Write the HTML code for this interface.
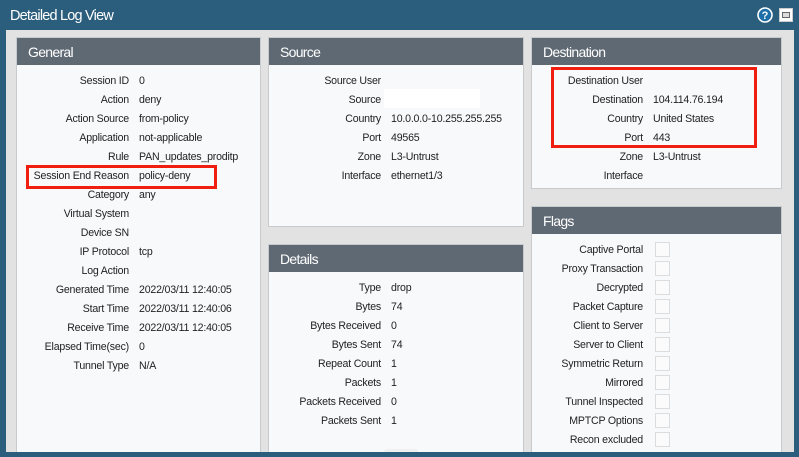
<!DOCTYPE html>
<html><head><style>
*{margin:0;padding:0;box-sizing:border-box}
body{width:799px;height:457px;overflow:hidden;background:#2b5d7c;font-family:"Liberation Sans",sans-serif;font-size:10.6px;color:#222;position:relative}
.title{position:absolute;left:10px;top:8px;color:#fff;font-size:14.5px;letter-spacing:-0.8px}
.area{position:absolute;left:6px;top:30px;width:788px;height:422px;background:#e2e2e2}
.p{position:absolute;background:#f8f9fa;border:1px solid #c8cbce}
.h{height:27px;background:#5f6973;color:#fff;font-size:14px;padding:6px 0 0 11px;letter-spacing:-0.7px}
.r{position:absolute;height:19px;line-height:19px;white-space:nowrap;letter-spacing:-0.2px}
.red{position:absolute;border:3px solid #f01e0e}
.cb{position:absolute;width:15px;height:15px;border:1px solid #dadcde;background:#fbfbfb}
</style></head><body>
<div class="title">Detailed Log View</div>
<svg style="position:absolute;left:757px;top:7px" width="16" height="16"><circle cx="8" cy="8" r="7" fill="#1e6ea8" stroke="#fff" stroke-width="1.6"/><text x="8" y="12" font-size="11" font-weight="bold" fill="#fff" text-anchor="middle" font-family="Liberation Sans">?</text></svg>
<div style="position:absolute;left:779px;top:8px;width:14px;height:14px;background:#fff;border:1px solid #ccc"><div style="margin:3px 2px;height:6px;border:1px solid #666;background:#ddd"></div></div>
<div class="area"></div>

<div class="p" style="left:16px;top:37px;width:245px;height:420px"><div class="h">General</div></div>
<div class="p" style="left:268px;top:37px;width:256px;height:190px"><div class="h">Source</div></div>
<div class="p" style="left:268px;top:244px;width:256px;height:213px"><div class="h">Details</div></div>
<div class="p" style="left:531px;top:37px;width:251px;height:152px"><div class="h">Destination</div></div>
<div class="p" style="left:531px;top:206px;width:251px;height:251px"><div class="h">Flags</div></div>
<div style="position:absolute;left:384px;top:89px;width:96px;height:19px;background:#fff"></div>
<div style="position:absolute;left:0;top:452px;width:799px;height:5px;background:#2b5d7c"></div>
<div style="position:absolute;left:384px;top:449px;width:34px;height:3px;background:#f0f0f0;border-radius:4px 4px 0 0"></div>

<script>
function add(lx,vx,y0,rows){rows.forEach((r,i)=>{var y=y0+i*19;var a=document.createElement('div');a.className='r';a.style.right=(799-lx)+'px';a.style.top=y+'px';a.textContent=r[0];document.body.appendChild(a);if(r[1]!=null){var b=document.createElement('div');b.className='r';b.style.left=vx+'px';b.style.top=y+'px';b.textContent=r[1];document.body.appendChild(b);}});}
add(129,139,72,[["Session ID","0"],["Action","deny"],["Action Source","from-policy"],["Application","not-applicable"],["Rule","PAN_updates_proditp"],["Session End Reason","policy-deny"],["Category","any"],["Virtual System",""],["Device SN",""],["IP Protocol","tcp"],["Log Action",""],["Generated Time","2022/03/11 12:40:05"],["Start Time","2022/03/11 12:40:06"],["Receive Time","2022/03/11 12:40:05"],["Elapsed Time(sec)","0"],["Tunnel Type","N/A"]]);
add(381,391,72,[["Source User",""],["Source",""],["Country","10.0.0.0-10.255.255.255"],["Port","49565"],["Zone","L3-Untrust"],["Interface","ethernet1/3"]]);
add(381,391,279,[["Type","drop"],["Bytes","74"],["Bytes Received","0"],["Bytes Sent","74"],["Repeat Count","1"],["Packets","1"],["Packets Received","0"],["Packets Sent","1"]]);
add(643,653,72,[["Destination User",""],["Destination","104.114.76.194"],["Country","United States"],["Port","443"],["Zone","L3-Untrust"],["Interface",""]]);
var f=["Captive Portal","Proxy Transaction","Decrypted","Packet Capture","Client to Server","Server to Client","Symmetric Return","Mirrored","Tunnel Inspected","MPTCP Options","Recon excluded"];
add(643,0,241,f.map(x=>[x,null]));
f.forEach((x,i)=>{var c=document.createElement('div');c.className='cb';c.style.left='655px';c.style.top=(242+i*19)+'px';document.body.appendChild(c);});
</script>
<div class="red" style="left:26px;top:165px;width:191px;height:24px"></div>
<div class="red" style="left:551px;top:67px;width:206px;height:81px"></div>
</body></html>
